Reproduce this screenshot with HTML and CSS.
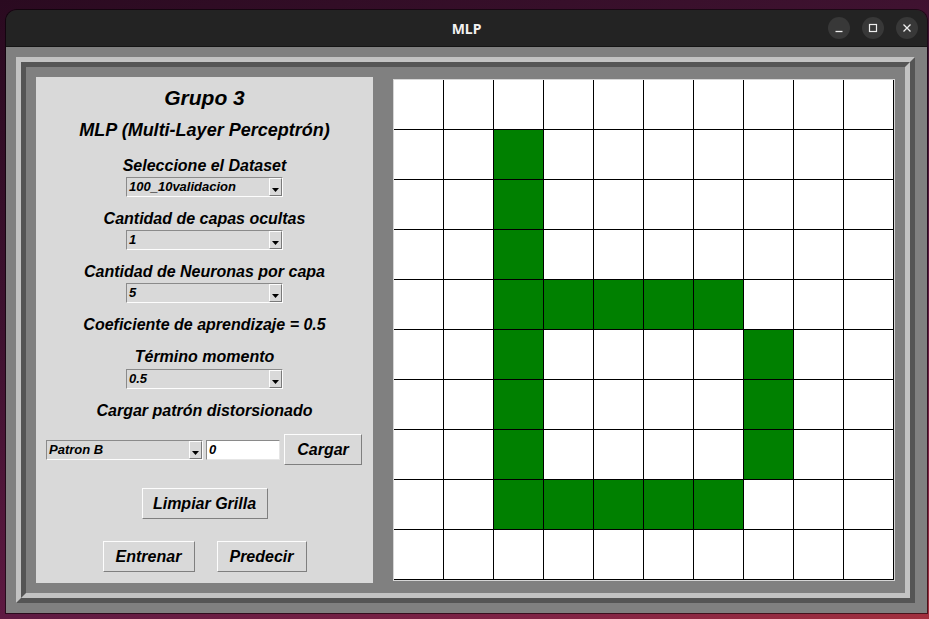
FILE: index.html
```html
<!DOCTYPE html>
<html lang="es">
<head>
<meta charset="utf-8">
<title>MLP</title>
<link rel="stylesheet" href="styles.css">
</head>
<body>
<div class="window">
  <div class="titlebar">
    <div class="tb-left"></div>
    <div class="title">MLP</div>
    <div class="controls">
      <span class="ctl"><svg width="10" height="10" viewBox="0 0 10 10"><path d="M1.5 8.5h7" stroke="#eee" stroke-width="1.3"/></svg></span>
      <span class="ctl"><svg width="10" height="10" viewBox="0 0 10 10"><rect x="1.5" y="1.5" width="7" height="7" fill="none" stroke="#eee" stroke-width="1.2"/></svg></span>
      <span class="ctl"><svg width="10" height="10" viewBox="0 0 10 10"><path d="M1.5 1.5l7 7M8.5 1.5l-7 7" stroke="#eee" stroke-width="1.3"/></svg></span>
    </div>
  </div>
  <div class="client">
    <div class="ridge">
      <div class="ridge-in">
        <div class="panel">
          <div class="h1">Grupo 3</div>
          <div class="h2">MLP (Multi-Layer Perceptrón)</div>
          <div class="lbl l1">Seleccione el Dataset</div>
          <div class="combo c1"><span class="combo-text">100_10validacion</span><span class="combo-btn"><svg width="7" height="4" viewBox="0 0 7 4"><polygon points="0,0 7,0 3.5,4" fill="#000"/></svg></span></div>
          <div class="lbl l2">Cantidad de capas ocultas</div>
          <div class="combo c2"><span class="combo-text">1</span><span class="combo-btn"><svg width="7" height="4" viewBox="0 0 7 4"><polygon points="0,0 7,0 3.5,4" fill="#000"/></svg></span></div>
          <div class="lbl l3">Cantidad de Neuronas por capa</div>
          <div class="combo c3"><span class="combo-text">5</span><span class="combo-btn"><svg width="7" height="4" viewBox="0 0 7 4"><polygon points="0,0 7,0 3.5,4" fill="#000"/></svg></span></div>
          <div class="lbl l4">Coeficiente de aprendizaje = 0.5</div>
          <div class="lbl l5">Término momento</div>
          <div class="combo c4"><span class="combo-text">0.5</span><span class="combo-btn"><svg width="7" height="4" viewBox="0 0 7 4"><polygon points="0,0 7,0 3.5,4" fill="#000"/></svg></span></div>
          <div class="lbl l6">Cargar patrón distorsionado</div>
          <div class="row">
            <div class="combo"><span class="combo-text">Patron B</span><span class="combo-btn"><svg width="7" height="4" viewBox="0 0 7 4"><polygon points="0,0 7,0 3.5,4" fill="#000"/></svg></span></div>
            <div class="entry">0</div>
            <div class="btn btn-cargar">Cargar</div>
          </div>
          <div class="btn btn-limpiar">Limpiar Grilla</div>
          <div class="btn-row">
            <div class="btn btn-entrenar">Entrenar</div>
            <div class="btn btn-predecir">Predecir</div>
          </div>
        </div>
        <div class="canvas">
          <div class="cell"></div><div class="cell"></div><div class="cell"></div><div class="cell"></div><div class="cell"></div><div class="cell"></div><div class="cell"></div><div class="cell"></div><div class="cell"></div><div class="cell"></div>
          <div class="cell"></div><div class="cell"></div><div class="cell g"></div><div class="cell"></div><div class="cell"></div><div class="cell"></div><div class="cell"></div><div class="cell"></div><div class="cell"></div><div class="cell"></div>
          <div class="cell"></div><div class="cell"></div><div class="cell g"></div><div class="cell"></div><div class="cell"></div><div class="cell"></div><div class="cell"></div><div class="cell"></div><div class="cell"></div><div class="cell"></div>
          <div class="cell"></div><div class="cell"></div><div class="cell g"></div><div class="cell"></div><div class="cell"></div><div class="cell"></div><div class="cell"></div><div class="cell"></div><div class="cell"></div><div class="cell"></div>
          <div class="cell"></div><div class="cell"></div><div class="cell g"></div><div class="cell g"></div><div class="cell g"></div><div class="cell g"></div><div class="cell g"></div><div class="cell"></div><div class="cell"></div><div class="cell"></div>
          <div class="cell"></div><div class="cell"></div><div class="cell g"></div><div class="cell"></div><div class="cell"></div><div class="cell"></div><div class="cell"></div><div class="cell g"></div><div class="cell"></div><div class="cell"></div>
          <div class="cell"></div><div class="cell"></div><div class="cell g"></div><div class="cell"></div><div class="cell"></div><div class="cell"></div><div class="cell"></div><div class="cell g"></div><div class="cell"></div><div class="cell"></div>
          <div class="cell"></div><div class="cell"></div><div class="cell g"></div><div class="cell"></div><div class="cell"></div><div class="cell"></div><div class="cell"></div><div class="cell g"></div><div class="cell"></div><div class="cell"></div>
          <div class="cell"></div><div class="cell"></div><div class="cell g"></div><div class="cell g"></div><div class="cell g"></div><div class="cell g"></div><div class="cell g"></div><div class="cell"></div><div class="cell"></div><div class="cell"></div>
          <div class="cell"></div><div class="cell"></div><div class="cell"></div><div class="cell"></div><div class="cell"></div><div class="cell"></div><div class="cell"></div><div class="cell"></div><div class="cell"></div><div class="cell"></div>
        </div>
      </div>
    </div>
  </div>
</div>
</body>
</html>
```

FILE: styles.css
```css
html, body {
  margin: 0;
  padding: 0;
}
body {
  width: 929px;
  height: 619px;
  overflow: hidden;
  background: linear-gradient(160deg, #2a0a20 0%, #3f1230 35%, #5e1a42 65%, #7f2345 85%, #a2303e 100%);
}
.window {
  margin: 10px 0 0 6px;
  width: 921px;
  box-shadow: 0 0 0 1px rgba(0, 0, 0, 0.55);
  border-radius: 11px 11px 0 0;
}
.titlebar {
  height: 36px;
  background: #232323;
  border-bottom: 1px solid #151515;
  border-radius: 11px 11px 0 0;
  display: grid;
  grid-template-columns: 1fr auto 1fr;
  align-items: center;
}
.title {
  font-family: "Noto Sans", "DejaVu Sans", sans-serif;
  font-weight: bold;
  font-size: 14px;
  color: #f2f2f2;
}
.controls {
  justify-self: end;
  display: flex;
  gap: 12px;
  padding-right: 9px;
}
.ctl {
  width: 22px;
  height: 22px;
  border-radius: 50%;
  background: #383838;
  display: flex;
  align-items: center;
  justify-content: center;
}
.client {
  background: #808080;
  padding: 10px;
  height: 566px;
  box-sizing: border-box;
}
.ridge {
  width: fit-content;
  border: 5px solid;
  border-color: #c3c3c3 #555555 #555555 #c3c3c3;
}
.ridge-in {
  border: 5px solid;
  border-color: #555555 #c3c3c3 #c3c3c3 #555555;
  padding: 10px;
  display: flex;
  align-items: center;
  gap: 20px;
}
.panel {
  width: 337px;
  height: 506px;
  box-sizing: border-box;
  background: #d9d9d9;
  padding-top: 9px;
  display: flex;
  flex-direction: column;
  align-items: center;
  font-family: "Liberation Sans", Arial, sans-serif;
  font-weight: bold;
  font-style: italic;
  color: #000;
}
.h1 {
  font-size: 21px;
  line-height: 24px;
}
.h2 {
  font-size: 18px;
  line-height: 20px;
  margin-top: 10px;
}
.lbl {
  font-size: 16px;
  line-height: 18px;
}
.l1 { margin-top: 17px; }
.l2 { margin-top: 13px; }
.l3 { margin-top: 13px; }
.l4 { margin-top: 13px; }
.l5 { margin-top: 14px; }
.l6 { margin-top: 13px; }
.c1 { margin-top: 2px; }
.c2 { margin-top: 2px; }
.c3 { margin-top: 2px; }
.c4 { margin-top: 3px; }
.combo {
  width: 157px;
  height: 20px;
  box-sizing: border-box;
  border: 1px solid;
  border-color: #8a8a8a #fdfdfd #fdfdfd #8a8a8a;
  background: #d9d9d9;
  display: flex;
}
.combo-text {
  flex: 1;
  font-size: 13px;
  line-height: 18px;
  padding-left: 2px;
  white-space: nowrap;
  overflow: hidden;
}
.combo-btn {
  width: 13px;
  box-sizing: border-box;
  border: 1px solid;
  border-color: #fdfdfd #7a7a7a #7a7a7a #fdfdfd;
  display: flex;
  align-items: flex-end;
  justify-content: center;
  padding-bottom: 3px;
}
.row {
  align-self: stretch;
  margin-top: 14px;
  padding-left: 10px;
  display: flex;
  align-items: center;
  height: 31px;
}
.entry {
  width: 74px;
  height: 20px;
  box-sizing: border-box;
  margin-left: 3px;
  background: #fff;
  border: 1px solid;
  border-color: #8a8a8a #e6e6e6 #e6e6e6 #8a8a8a;
  font-size: 13px;
  line-height: 18px;
  padding-left: 2px;
}
.btn {
  height: 31px;
  box-sizing: border-box;
  border: 1px solid;
  border-color: #fdfdfd #7f7f7f #7f7f7f #fdfdfd;
  background: #d9d9d9;
  font-size: 16px;
  line-height: 29px;
  text-align: center;
}
.btn-cargar {
  width: 78px;
  margin-left: 4px;
}
.btn-limpiar {
  width: 126px;
  margin-top: 23px;
}
.btn-row {
  display: flex;
  gap: 22px;
  margin-top: 22px;
}
.btn-entrenar { width: 92px; }
.btn-predecir { width: 90px; }
.canvas {
  width: 502px;
  height: 502px;
  box-sizing: border-box;
  border: 1px solid #d6d6d6;
  background: #fff;
  display: grid;
  grid-template-columns: repeat(10, 50px);
  grid-auto-rows: 50px;
}
.cell {
  box-sizing: border-box;
  border-right: 1px solid #000;
  border-bottom: 1px solid #000;
}
.g {
  background: #008000;
}
```
